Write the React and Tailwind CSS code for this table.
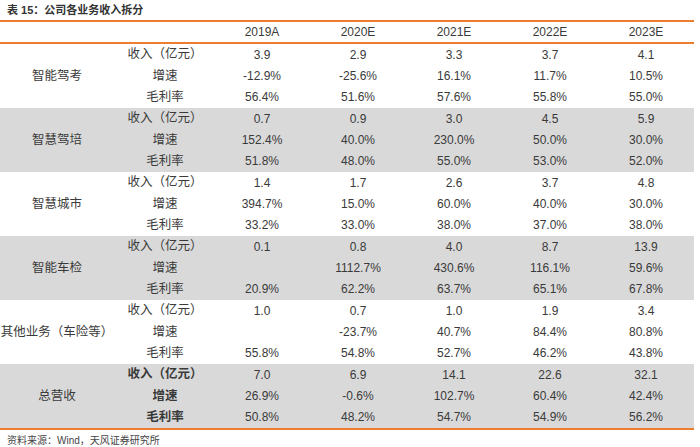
const years = ["2019A", "2020E", "2021E", "2022E", "2023E"];

const groups = [
  {
    name: "智能驾考",
    gray: false,
    rows: [
      ["3.9", "2.9", "3.3", "3.7", "4.1"],
      ["-12.9%", "-25.6%", "16.1%", "11.7%", "10.5%"],
      ["56.4%", "51.6%", "57.6%", "55.8%", "55.0%"],
    ],
  },
  {
    name: "智慧驾培",
    gray: true,
    rows: [
      ["0.7", "0.9", "3.0", "4.5", "5.9"],
      ["152.4%", "40.0%", "230.0%", "50.0%", "30.0%"],
      ["51.8%", "48.0%", "55.0%", "53.0%", "52.0%"],
    ],
  },
  {
    name: "智慧城市",
    gray: false,
    rows: [
      ["1.4", "1.7", "2.6", "3.7", "4.8"],
      ["394.7%", "15.0%", "60.0%", "40.0%", "30.0%"],
      ["33.2%", "33.0%", "38.0%", "37.0%", "38.0%"],
    ],
  },
  {
    name: "智能车检",
    gray: true,
    rows: [
      ["0.1", "0.8", "4.0", "8.7", "13.9"],
      ["", "1112.7%", "430.6%", "116.1%", "59.6%"],
      ["20.9%", "62.2%", "63.7%", "65.1%", "67.8%"],
    ],
  },
  {
    name: "其他业务（车险等）",
    gray: false,
    rows: [
      ["1.0", "0.7", "1.0", "1.9", "3.4"],
      ["", "-23.7%", "40.7%", "84.4%", "80.8%"],
      ["55.8%", "54.8%", "52.7%", "46.2%", "43.8%"],
    ],
  },
  {
    name: "总营收",
    gray: true,
    bold: true,
    rows: [
      ["7.0", "6.9", "14.1", "22.6", "32.1"],
      ["26.9%", "-0.6%", "102.7%", "60.4%", "42.4%"],
      ["50.8%", "48.2%", "54.7%", "54.9%", "56.2%"],
    ],
  },
];

const metrics = ["收入（亿元）", "增速", "毛利率"];

export default function App() {
  return (
    <div
      className="w-[700px] h-[447px] bg-white text-[#3a3a3a] overflow-hidden"
      style={{ fontFamily: '"Liberation Sans", "Noto Sans CJK SC", sans-serif' }}
    >
      <div className="h-[20px] pl-[7px] pt-[4px] text-[11px] leading-[13px] font-bold text-[#333]">
        表 15：公司各业务收入拆分
      </div>
      <div className="w-[694px]">
        <div className="h-[24px] border-y-2 border-[#ed7d31] grid grid-cols-[116px_98px_96px_96px_96px_96px_96px] items-center text-[12px]">
          <div />
          <div />
          {years.map((y) => (
            <div key={y} className="text-center">
              {y}
            </div>
          ))}
        </div>
        {groups.map((g) => (
          <div
            key={g.name}
            className={`h-[64px] grid grid-cols-[116px_98px_480px] text-[12px] ${g.gray ? "bg-[#d9d9d9]" : "bg-white"}`}
          >
            <div className="flex items-center justify-center pr-[2px] text-[12.5px]">{g.name}</div>
            <div className="grid grid-rows-3">
              {metrics.map((m) => (
                <div
                  key={m}
                  className={`flex items-center justify-center text-[12.5px] ${g.bold ? "font-bold" : ""}`}
                >
                  {m}
                </div>
              ))}
            </div>
            <div className="grid grid-rows-3">
              {g.rows.map((r, i) => (
                <div key={i} className="grid grid-cols-5 items-center">
                  {r.map((v, j) => (
                    <div key={j} className="text-center">
                      {v}
                    </div>
                  ))}
                </div>
              ))}
            </div>
          </div>
        ))}
        <div className="border-t-2 border-[#ed7d31]" />
      </div>
      <div className="pl-[7px] pt-[3px] text-[10px] text-[#444]">资料来源：Wind，天风证券研究所</div>
    </div>
  );
}
